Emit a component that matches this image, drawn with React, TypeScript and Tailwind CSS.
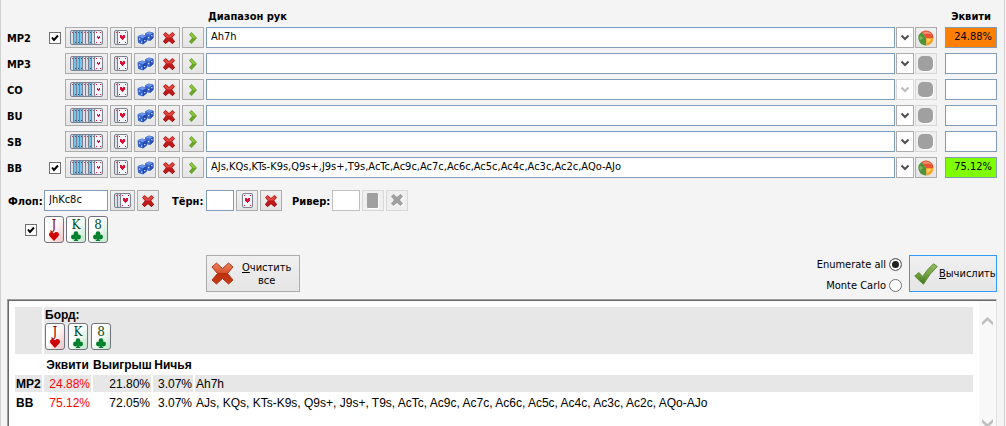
import React, { useState } from 'react';

type Suit = 'heart' | 'club';

interface Seat {
    name: string;
    enabled: boolean;
    range: string;
    equity: string;
    historyDisabled?: boolean;
}

const initialSeats: Seat[] = [
    { name: 'MP2', enabled: true, range: 'Ah7h', equity: '24.88%' },
    { name: 'MP3', enabled: false, range: '', equity: '' },
    { name: 'CO', enabled: false, range: '', equity: '', historyDisabled: true },
    { name: 'BU', enabled: false, range: '', equity: '' },
    { name: 'SB', enabled: false, range: '', equity: '' },
    {
        name: 'BB',
        enabled: true,
        range: 'AJs,KQs,KTs-K9s,Q9s+,J9s+,T9s,AcTc,Ac9c,Ac7c,Ac6c,Ac5c,Ac4c,Ac3c,Ac2c,AQo-AJo',
        equity: '75.12%'
    }
];

const board: { rank: string; suit: Suit }[] = [
    { rank: 'J', suit: 'heart' },
    { rank: 'K', suit: 'club' },
    { rank: '8', suit: 'club' }
];

const results = [
    { name: 'MP2', equity: '24.88%', win: '21.80%', tie: '3.07%', range: 'Ah7h' },
    {
        name: 'BB',
        equity: '75.12%',
        win: '72.05%',
        tie: '3.07%',
        range: 'AJs, KQs, KTs-K9s, Q9s+, J9s+, T9s, AcTc, Ac9c, Ac7c, Ac6c, Ac5c, Ac4c, Ac3c, Ac2c, AQo-AJo'
    }
];

const equityColor = (equity: string) => {
    if (!equity) return 'bg-white';
    return parseFloat(equity) > 50 ? 'bg-[#80ff00]' : 'bg-[#ff8000]';
};

// Small heart with the corner pips, shared by the card icons
const CardFace = ({ x, width = 11 }: { x: number; width?: number }) => {
    const c = x + Math.floor(width / 2);
    const small = width < 11;
    return (
        <g>
            <rect x={x + 0.5} y="0.5" width={width - 1} height="14" rx="1.5" fill="#f6f6fa" stroke="#7c8090" shapeRendering="auto" />
            <g fill="#dc0f36">
                {small ? (
                    <>
                        <rect x={c - 1} y="6" width="1" height="1" />
                        <rect x={c + 1} y="6" width="1" height="1" />
                        <rect x={c - 1} y="7" width="3" height="1" />
                        <rect x={c} y="8" width="1" height="1" />
                    </>
                ) : (
                    <>
                        <rect x={c - 2} y="5" width="2" height="1" />
                        <rect x={c + 1} y="5" width="2" height="1" />
                        <rect x={c - 2} y="6" width="5" height="2" />
                        <rect x={c - 1} y="8" width="3" height="1" />
                        <rect x={c} y="9" width="1" height="1" />
                    </>
                )}
                <rect x={x + 2} y="2" width="1" height="1" />
                <rect x={x + width - 3} y="2" width="1" height="1" />
                <rect x={x + 2} y="12" width="1" height="1" />
                <rect x={x + width - 3} y="12" width="1" height="1" />
            </g>
        </g>
    );
};

const Sliver = ({ x, blue }: { x: number; blue?: boolean }) => (
    <g>
        <rect x={x + 0.5} y="0.5" width="5" height="14" rx="1.5" fill={blue ? '#74c4ee' : '#dcdee6'} stroke="#7c8090" shapeRendering="auto" />
        <rect x={x + 2} y="2" width="1" height="1" fill={blue ? '#2d5a74' : '#c8425e'} />
        {blue && <rect x={x + 2} y="12" width="1" height="1" fill="#2d5a74" />}
    </g>
);

const DeckIcon = () => (
    <svg width="33" height="15" viewBox="0 0 33 15" shapeRendering="crispEdges">
        {[false, true, true, true, false, false, true, false].map((blue, i) => (
            <Sliver key={i} x={i * 3} blue={blue} />
        ))}
        <CardFace x={24} width={9} />
    </svg>
);

const TwoCardsIcon = () => (
    <svg width="14" height="15" viewBox="0 0 14 15" shapeRendering="crispEdges">
        <Sliver x={0} />
        <CardFace x={3} />
    </svg>
);

const FlopIcon = () => (
    <svg width="17" height="15" viewBox="0 0 17 15" shapeRendering="crispEdges">
        <Sliver x={0} />
        <Sliver x={3} />
        <CardFace x={6} />
    </svg>
);

const OneCardIcon = () => (
    <svg width="11" height="15" viewBox="0 0 11 15" shapeRendering="crispEdges">
        <CardFace x={0} />
    </svg>
);

const DiceIcon = () => (
    <svg width="17" height="14" viewBox="0 0 17 14">
        <g strokeLinejoin="round">
            <path d="M8.500 2.500 12 1 16 2V7L13 9.500 9 8.500Z" fill="#3a69d2" stroke="#3a69d2" />
            <path d="M8.500 2.500 12 .8 16 2 13 4Z" fill="#6a92e6" />
            <path d="M13 4l3.300-2v5L13 9.800Z" fill="#2850b8" />
            <path d="M1 5.500 5 4 9.500 5v5L6 13 1.500 11.500Z" fill="#3462cd" stroke="#3462cd" />
            <path d="M1 5.500 5 3.700 9.500 5 6 7.200Z" fill="#6e96e8" />
            <path d="M6 7.200 9.800 5v5.200L6 13.200Z" fill="#2448ac" />
        </g>
        <g fill="#dce8ff">
            <rect x="2" y="7.500" width="1.200" height="1.200" />
            <rect x="4" y="10.500" width="1.200" height="1.200" />
            <rect x="7.200" y="9" width="1.200" height="1.200" />
            <rect x="11" y="6" width="1.200" height="1.200" />
            <rect x="14.200" y="4" width="1.200" height="1.200" />
        </g>
    </svg>
);

const crossPath = 'M0 2.500 2.500 0 6 3 9.500 0 12 2.500 9 6 12 9.500 9.500 12 6 9 2.500 12 0 9.500 3 6Z';

const CrossIcon = ({ disabled }: { disabled?: boolean }) =>
    disabled ? (
        <svg width="13" height="13" viewBox="0 0 13 13">
            <path d={crossPath} fill="#fff" transform="translate(1 1)" />
            <path d={crossPath} fill="#a0a0a0" />
        </svg>
    ) : (
        <svg width="12" height="12" viewBox="0 0 12 12">
            <path d={crossPath} fill="#c11a1a" />
            <path d="M1 2.500 2.500 1 6 4 9.500 1 11 2.500 8 5.500H4Z" fill="#dc4a42" />
            <path d="M3 6 .5 9.500 2.500 11.500 6 8.500 9.500 11.500 11.500 9.500 9 6" fill="none" stroke="#96100f" strokeWidth=".8" />
        </svg>
    );

const ArrowIcon = () => (
    <svg width="8" height="12" viewBox="0 0 8 12">
        <path d="M0 2.500 2.500 0 8 6 2.500 12 0 9.500 3 6Z" fill="#6aa52b" />
        <path d="M1 2.500 2.500 1 7 6H4Z" fill="#8cc63f" />
    </svg>
);

const ChevronIcon = ({ disabled }: { disabled?: boolean }) => (
    <svg width="8" height="7" viewBox="0 0 8 7">
        <path d="M.5 1.500 4 5 7.500 1.500" fill="none" stroke={disabled ? '#bcbcbc' : '#505050'} strokeWidth="2" />
    </svg>
);

const PieIcon = () => (
    <svg width="16" height="16" viewBox="0 0 16 16">
        <circle cx="8" cy="8" r="7.500" fill="#e4d8c8" />
        <path d="M8 8 3.500 2A7.500 7.500 0 0 1 15.500 8Z" fill="#ea5330" />
        <path d="M8 8 3.500 2A7.500 7.500 0 0 0 8.500 15.500Z" fill="#4f9436" />
        <path d="M8 8H15.500A7.500 7.500 0 0 1 8.500 15.500Z" fill="#f7a52a" />
        <path d="M5 2.500A6.500 6.500 0 0 1 13.500 4.500Q9 3 6 4Z" fill="#f5987c" />
        <path d="M2 5.500 5 8 2 10.500Q1 8 2 5.500Z" fill="#7cb862" />
        <path d="M9 9h4.500L9.500 13Z" fill="#ffd566" />
    </svg>
);

const DisabledBlob = ({ width }: { width: number }) => (
    <svg width={width + 1} height="16" viewBox={`0 0 ${width + 1} 16`}>
        <rect x="1" y="1" width={width} height="15" rx={width > 12 ? 5 : 1} fill="#fff" />
        <rect width={width} height="15" rx={width > 12 ? 5 : 1} fill="#a0a0a0" />
    </svg>
);

const BigCrossIcon = () => (
    <svg width="23" height="23" viewBox="0 0 23 23">
        <defs>
            <linearGradient id="bigCross" x1="0" y1="0" x2="0" y2="1">
                <stop offset="0" stopColor="#ec8260" />
                <stop offset=".45" stopColor="#d9542f" />
                <stop offset=".5" stopColor="#bd2f0d" />
                <stop offset="1" stopColor="#c53c14" />
            </linearGradient>
        </defs>
        <path d="M1 5 5.500 1 11.500 6.500 17.500 1 22 5 16.500 11.500 22 18 17.500 22 11.500 16.500 5.500 22 1 18 6.500 11.500Z" fill="url(#bigCross)" stroke="#ad3717" strokeLinejoin="round" />
    </svg>
);

const CheckIcon = () => (
    <svg width="24" height="22" viewBox="0 0 24 22">
        <defs>
            <linearGradient id="bigCheck" x1="0" y1="0" x2="0" y2="1">
                <stop offset="0" stopColor="#97bd68" />
                <stop offset=".55" stopColor="#6e9e3a" />
                <stop offset="1" stopColor="#42741b" />
            </linearGradient>
        </defs>
        <path d="M.7 13 5 9.500 8.500 13.500Q13.500 6 19.500.8L23.300 3.500Q15.500 10.500 9.500 21.200Q5.500 18 .7 13Z" fill="url(#bigCheck)" stroke="#5f8f38" strokeLinejoin="round" />
    </svg>
);

const SuitIcon = ({ suit }: { suit: Suit }) => (
    <svg width="10" height="10" viewBox="0 0 10 10">
        {suit === 'heart' ? (
            <path d="M5 10 .6 5.300C-.6 3.500.3 1 2.500 1 3.800 1 4.600 1.700 5 2.600 5.400 1.700 6.200 1 7.500 1 9.700 1 10.600 3.500 9.400 5.300Z" fill="#d00000" />
        ) : (
            <g fill="#00802b">
                <circle cx="5" cy="2.500" r="2.300" />
                <circle cx="2.400" cy="6" r="2.400" />
                <circle cx="7.600" cy="6" r="2.400" />
                <path d="M4.300 4h1.400L6 8l1.500 2h-5L4 8Z" />
            </g>
        )}
    </svg>
);

const PlayingCard = ({ rank, suit }: { rank: string; suit: Suit }) => (
    <span
        className={`flex h-[27px] w-5 flex-col items-center rounded-[3px] border border-[#737380] bg-linear-to-br from-white from-40% pt-0.5 font-['DejaVu_Serif','Liberation_Serif',serif] text-[12px] leading-3 ${
            suit === 'heart' ? 'to-[#f0c4c4] text-[#900000]' : 'to-[#bfe6ca] text-[#004d1a]'
        }`}
    >
        {rank}
        <SuitIcon suit={suit} />
    </span>
);

interface ToolButtonProps {
    label: string;
    width?: string;
    disabled?: boolean;
    children: React.ReactNode;
}

const ToolButton: React.FC<ToolButtonProps> = ({ label, width = 'w-[22px]', disabled, children }) => (
    <button
        type="button"
        aria-label={label}
        disabled={disabled}
        className={`flex h-[21px] shrink-0 items-center justify-center border ${width} ${
            disabled ? 'border-[#d8d8d8] bg-[#efefef]' : 'border-[#acacac] bg-linear-to-b from-[#f0f0f0] to-[#e5e5e5]'
        }`}
    >
        {children}
    </button>
);

const inputStyle = 'h-[21px] min-w-0 border border-[#7f9db9] bg-white px-1 pb-0.5 outline-none';

const Tick = ({ label, checked, onChange }: { label: string; checked: boolean; onChange: () => void }) => (
    <span className="relative flex size-3 shrink-0">
        <input
            type="checkbox"
            aria-label={label}
            checked={checked}
            onChange={onChange}
            className="size-3 appearance-none border border-[#707070] bg-white"
        />
        {checked && (
            <svg width="12" height="12" viewBox="0 0 12 12" className="pointer-events-none absolute inset-0">
                <path d="M3 5.500 5 8 9 3.500" fill="none" stroke="#000" strokeWidth="2" />
            </svg>
        )}
    </span>
);

export default function App() {
    const [seats, setSeats] = useState<Seat[]>(initialSeats);
    const [flop, setFlop] = useState('JhKc8c');
    const [turn, setTurn] = useState('');
    const [flopEnabled, setFlopEnabled] = useState(true);
    const [mode, setMode] = useState('Enumerate all');

    const updateSeat = (name: string, patch: Partial<Seat>) => {
        setSeats(prev => prev.map(seat => (seat.name === name ? { ...seat, ...patch } : seat)));
    };

    return (
        <main className="flex h-screen flex-col overflow-hidden border-l border-[#d0d0d0] bg-[#f4f4f4] pr-px font-['DejaVu_Sans_Condensed','Noto_Sans',sans-serif] text-[11px] leading-[13px] text-black">
            <div className="flex min-h-0 flex-1 flex-col border-r border-[#d0d0d0] pr-[7px] pl-[6px]">
                {/* Column titles */}
                <div className="flex h-[27px] items-center justify-between pt-1.5 pr-[6px] pl-[201px] font-bold">
                    <span>Диапазон рук</span>
                    <span>Эквити</span>
                </div>

                {/* Seats */}
                <div className="flex flex-col gap-[5px]">
                    {seats.map(seat => (
                        <div key={seat.name} className="flex items-center">
                            <label htmlFor={`range-${seat.name}`} className="w-[42px] pt-0.5 font-bold">{seat.name}</label>
                            <div className="w-4">
                                {seat.enabled && (
                                    <Tick label={seat.name} checked={seat.enabled} onChange={() => updateSeat(seat.name, { enabled: false })} />
                                )}
                            </div>
                            <div className="mr-0.5 flex gap-0.5">
                                <ToolButton label="Диапазон" width="w-[43px]"><DeckIcon /></ToolButton>
                                <ToolButton label="Карты"><TwoCardsIcon /></ToolButton>
                                <ToolButton label="Случайная рука"><DiceIcon /></ToolButton>
                                <ToolButton label="Очистить"><CrossIcon /></ToolButton>
                                <ToolButton label="Далее"><ArrowIcon /></ToolButton>
                            </div>
                            <input
                                id={`range-${seat.name}`}
                                type="text"
                                value={seat.range}
                                onChange={e => updateSeat(seat.name, { range: e.target.value })}
                                className={`${inputStyle} flex-1`}
                            />
                            <button
                                type="button"
                                aria-label="История"
                                disabled={seat.historyDisabled}
                                className={`mx-px flex h-[21px] w-[18px] items-center justify-center border bg-white ${seat.historyDisabled ? 'border-[#d8d8d8]' : 'border-[#acacac]'}`}
                            >
                                <ChevronIcon disabled={seat.historyDisabled} />
                            </button>
                            <ToolButton label="График" disabled={!seat.range}>
                                {seat.range ? <PieIcon /> : <DisabledBlob width={15} />}
                            </ToolButton>
                            <input
                                type="text"
                                readOnly
                                aria-label={`Эквити ${seat.name}`}
                                value={seat.equity}
                                className={`ml-2 h-[21px] w-[52px] border border-[#7f9db9] pr-1 pb-0.5 text-right outline-none ${equityColor(seat.equity)}`}
                            />
                        </div>
                    ))}
                </div>

                {/* Board */}
                <div className="mt-3 flex items-center gap-0.5">
                    <label htmlFor="flop" className="w-[35px] pt-0.5 pl-px font-bold whitespace-nowrap">Флоп:</label>
                    <input id="flop" type="text" value={flop} onChange={e => setFlop(e.target.value)} className={`${inputStyle} w-16`} />
                    <ToolButton label="Выбрать флоп" width="w-[25px]"><FlopIcon /></ToolButton>
                    <ToolButton label="Очистить флоп"><CrossIcon /></ToolButton>
                    <label htmlFor="turn" className="w-[43px] pt-0.5 pl-[11px] font-bold whitespace-nowrap">Тёрн:</label>
                    <input id="turn" type="text" value={turn} onChange={e => setTurn(e.target.value)} className={`${inputStyle} w-7`} />
                    <ToolButton label="Выбрать тёрн"><OneCardIcon /></ToolButton>
                    <ToolButton label="Очистить тёрн"><CrossIcon /></ToolButton>
                    <label htmlFor="river" className="w-[46px] pt-0.5 pl-2 font-bold whitespace-nowrap">Ривер:</label>
                    <input id="river" type="text" disabled className="h-[21px] w-7 border border-[#c0c0c0] bg-white" />
                    <ToolButton label="Выбрать ривер" disabled><DisabledBlob width={11} /></ToolButton>
                    <ToolButton label="Очистить ривер" disabled><CrossIcon disabled /></ToolButton>
                </div>
                <div className="mt-[5px] flex items-center gap-[7px] pl-[18px]">
                    <Tick label="Флоп" checked={flopEnabled} onChange={() => setFlopEnabled(!flopEnabled)} />
                    <div className="flex gap-0.5">
                        {board.map(card => <PlayingCard key={card.rank} {...card} />)}
                    </div>
                </div>

                {/* Actions */}
                <div className="mt-3 flex items-center justify-between pl-[199px]">
                    <button type="button" className="flex h-[37px] w-[94px] items-center gap-2 border border-[#acacac] bg-linear-to-b from-[#f0f0f0] to-[#e5e5e5] pl-1">
                        <BigCrossIcon />
                        <span><u>О</u>чистить<br />все</span>
                    </button>
                    <div className="flex items-center gap-[7px]">
                        <div className="flex flex-col items-end gap-2 pt-0.5">
                            {['Enumerate all', 'Monte Carlo'].map(name => (
                                <label key={name} className="flex items-center gap-[3px]">
                                    {name}
                                    <input
                                        type="radio"
                                        name="mode"
                                        checked={mode === name}
                                        onChange={() => setMode(name)}
                                        className="size-[13px] appearance-none rounded-full border border-[#707070] bg-white checked:bg-[#222] checked:shadow-[inset_0_0_0_2px_white]"
                                    />
                                </label>
                            ))}
                        </div>
                        <button type="button" className="flex h-[37px] w-[88px] items-center gap-px border border-[#3399ff] bg-linear-to-b from-[#f0f0f0] to-[#e5e5e5] pl-1 whitespace-nowrap">
                            <CheckIcon />
                            <span><u>В</u>ычислить</span>
                        </button>
                    </div>
                </div>

                {/* Results */}
                <section className="mt-[7px] flex min-h-0 flex-1 border-t border-r border-l border-t-[#a0a0a0] border-r-[#e3e3e3] border-l-[#a0a0a0] bg-white font-['Liberation_Sans',Arial,sans-serif] text-[12px] leading-[15px]">
                    <div className="min-w-0 flex-1 overflow-hidden border-t border-l border-[#696969] px-1 pt-1">
                        <table className="w-full table-fixed border-separate border-spacing-0.5">
                            <colgroup>
                                <col className="w-[27px]" />
                                <col className="w-[47px]" />
                                <col className="w-[58px]" />
                                <col className="w-10" />
                                <col />
                            </colgroup>
                            <thead>
                                <tr className="bg-[#e7e7e7]">
                                    <td />
                                    <td colSpan={4} className="px-px pt-px pb-1">
                                        <b className="block">Борд:</b>
                                        <div className="flex gap-[3px]">
                                            {board.map(card => <PlayingCard key={card.rank} {...card} />)}
                                        </div>
                                    </td>
                                </tr>
                                <tr>
                                    <td />
                                    <th className="pt-0.5">Эквити</th>
                                    <th className="pt-0.5">Выигрыш</th>
                                    <th className="pt-0.5">Ничья</th>
                                    <td />
                                </tr>
                            </thead>
                            <tbody>
                                {results.map((row, i) => (
                                    <tr key={row.name} className={i % 2 === 0 ? 'bg-[#e7e7e7]' : ''}>
                                        <th className="px-px pt-0.5 text-left">{row.name}</th>
                                        <td className="px-px pt-0.5 text-right text-[#ff0000]">{row.equity}</td>
                                        <td className="px-px pt-0.5 text-right">{row.win}</td>
                                        <td className="px-px pt-0.5 text-right">{row.tie}</td>
                                        <td className="px-px pt-0.5">{row.range}</td>
                                    </tr>
                                ))}
                            </tbody>
                        </table>
                    </div>
                    <div className="flex w-[17px] flex-col items-center justify-between border-t border-[#696969] bg-[#f8f8f8] pt-4">
                        <svg width="11" height="10" viewBox="0 0 11 10">
                            <path d="M0 8.500V5L5.500 0 11 5v3.500L5.500 3.500Z" fill="#bfbfbf" />
                        </svg>
                        <svg width="11" height="7" viewBox="0 0 11 7">
                            <path d="M0 0v3.500L5.500 9 11 3.500V0L5.500 5Z" fill="#bfbfbf" />
                        </svg>
                    </div>
                </section>
            </div>
        </main>
    );
}
